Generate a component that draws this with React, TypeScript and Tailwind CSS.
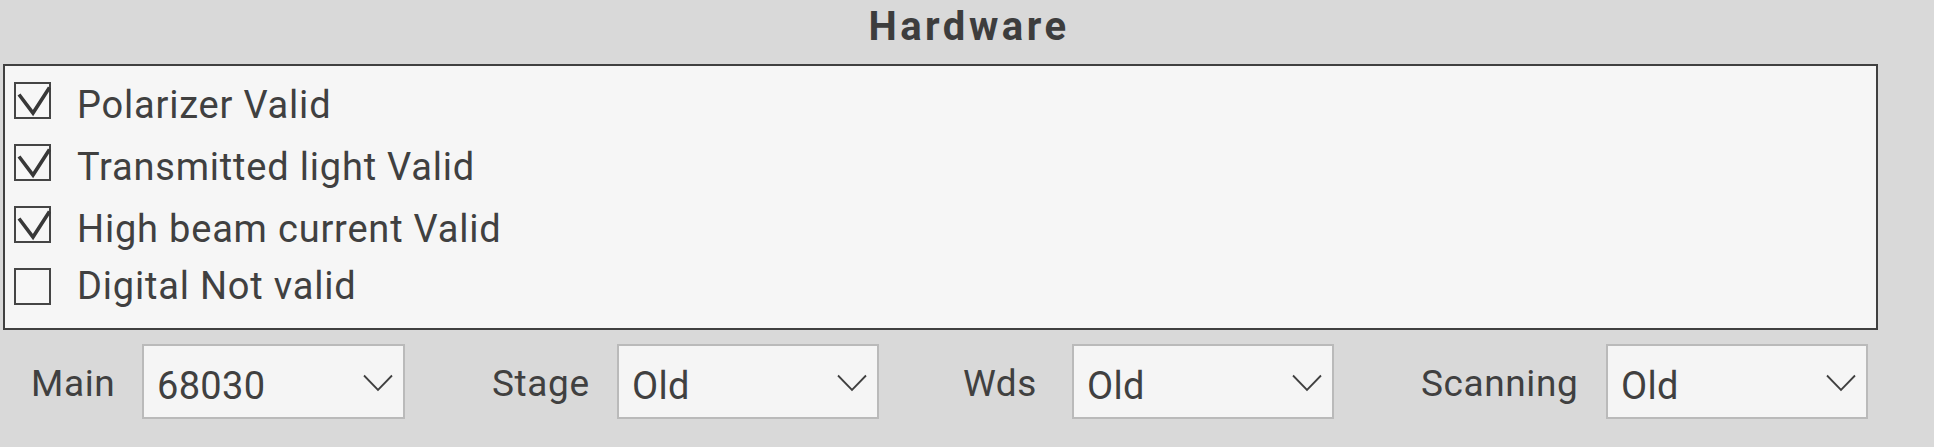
import React from "react";

const items = [
  { label: "Polarizer Valid", checked: true, mt: "mt-[10px]" },
  { label: "Transmitted light Valid", checked: true, mt: "mt-[10px]" },
  { label: "High beam current Valid", checked: true, mt: "mt-[10px]" },
  { label: "Digital Not valid", checked: false, mt: "mt-[0px]" },
];

function Check({ checked }: { checked: boolean }) {
  return (
    <div className="relative w-[37px] h-[37px] shrink-0 border-2 border-[#454545] bg-[#f7f7f7]">
      {checked && (
        <svg className="absolute left-[-2px] top-[-2px]" width="37" height="37" viewBox="0 0 37 37">
          <path d="M5 12.5 L19 31 L35.5 5.5" fill="none" stroke="#383838" strokeWidth="3.6" strokeLinejoin="miter" />
        </svg>
      )}
    </div>
  );
}

function Select({ value, w }: { value: string; w: string }) {
  return (
    <div className={`flex items-center justify-between h-[75px] border-2 border-[#bababa] bg-[#f5f5f5] pl-[13px] pr-[10px] ${w}`}>
      <span className="pt-[9px] text-[38px] leading-none text-[#404040] tracking-[0.3px]">{value}</span>
      <svg width="30" height="18" viewBox="0 0 30 18" className="mt-[2px]">
        <path d="M1 1.5 L15 16 L29 1.5" fill="none" stroke="#404040" strokeWidth="1.8" />
      </svg>
    </div>
  );
}

export default function App() {
  return (
    <div
      className="w-[1934px] h-[447px] bg-[#d9d9d9] text-[#404040]"
      style={{ fontFamily: "Roboto, 'Noto Sans', sans-serif" }}
    >
      <div className="h-[64px] flex items-center justify-center pb-[10px]">
        <span className="text-[40px] font-bold tracking-[3.5px] leading-none text-[#3d3d3d] ml-[4px]">Hardware</span>
      </div>
      <div className="ml-[3px] w-[1875px] h-[266px] border-2 border-[#404040] bg-[#f6f6f6] pt-[3px] pl-[9px]">
        {items.map((it) => (
          <div key={it.label} className="flex items-center h-[62px]">
            <Check checked={it.checked} />
            <span className={`ml-[26px] ${it.mt} text-[38px] leading-none text-[#404040] tracking-[0.8px]`}>{it.label}</span>
          </div>
        ))}
      </div>
      <div className="mt-[14px] flex items-center h-[75px] pl-[31px]">
        <span className="w-[111px] mt-[4px] text-[37px] leading-none tracking-[0.6px]">Main</span>
        <Select value="68030" w="w-[263px]" />
        <span className="ml-[87px] w-[125px] mt-[4px] text-[37px] leading-none tracking-[0.6px]">Stage</span>
        <Select value="Old" w="w-[262px]" />
        <span className="ml-[84px] w-[109px] mt-[4px] text-[37px] leading-none tracking-[0.6px]">Wds</span>
        <Select value="Old" w="w-[262px]" />
        <span className="ml-[87px] w-[185px] mt-[4px] text-[37px] leading-none tracking-[0.6px]">Scanning</span>
        <Select value="Old" w="w-[262px]" />
      </div>
    </div>
  );
}
